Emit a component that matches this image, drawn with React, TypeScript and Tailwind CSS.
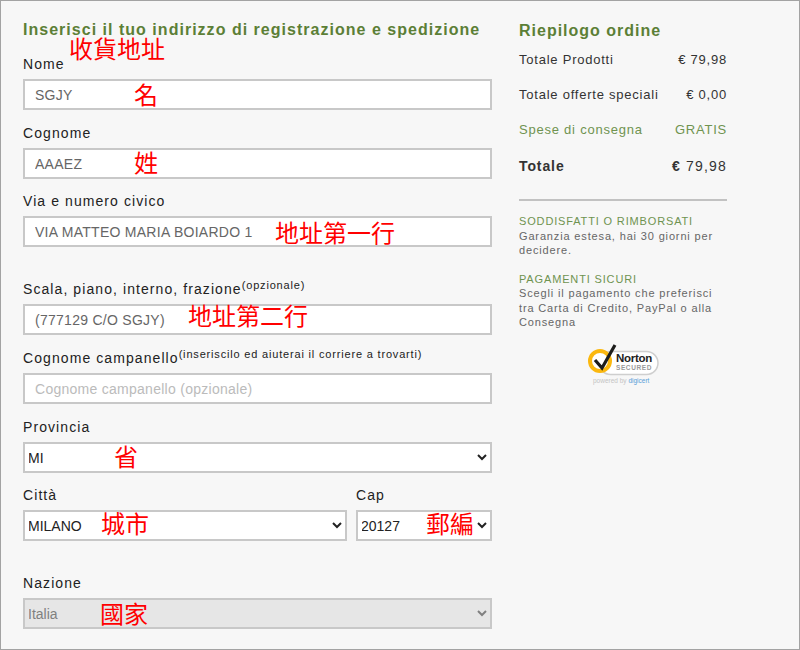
import type { ReactNode } from "react";

const inputClass =
  "block h-[31px] w-full border-2 border-[#c8c8c8] bg-white px-[10px] text-[14px] tracking-[0.27px] text-[#666] outline-none placeholder:text-[#bbb]";
const selectClass =
  "block h-[31px] w-full border-2 border-[#c8c8c8] bg-white text-[14px] text-[#222] outline-none [text-indent:-1px]";

function Label({ children }: { children: ReactNode }) {
  return <label className="block h-[25px] text-[14px] leading-[20px] tracking-[1.08px] text-[#222]">{children}</label>;
}

function Note({ children }: { children: ReactNode }) {
  return <sup className="text-[11px] tracking-[0.82px]">{children}</sup>;
}

function Mark({ className, children }: { className: string; children: ReactNode }) {
  return (
    <span className={`pointer-events-none absolute whitespace-nowrap text-[24px] leading-[30px] text-[#f00] ${className}`}>
      {children}
    </span>
  );
}

function SummaryRow({ label, value, green }: { label: string; value: string; green?: boolean }) {
  return (
    <div className={`flex h-[35px] items-center justify-between text-[13px] tracking-[0.77px] ${green ? "text-[#6f9350]" : "text-[#333]"}`}>
      <span>{label}</span>
      <span>{value}</span>
    </div>
  );
}

function NortonBadge() {
  return (
    <div className="relative mt-[14px] ml-[68px] h-[42px] w-[74px]">
      <svg width="74" height="42" viewBox="0 0 74 42" className="absolute left-0 top-0">
        <rect x="12" y="7.5" width="59" height="23" rx="11.5" fill="#fff" stroke="#cfcfcf" strokeWidth="1.5" />
        <circle cx="13" cy="17" r="10" fill="#fff" stroke="#fbb80f" strokeWidth="4" />
        <path d="M8 16 L15 24 L28 1" fill="none" stroke="#1d1d1b" strokeWidth="3.2" />
      </svg>
      <span className="absolute left-[29px] top-[7px] text-[11.5px] font-bold leading-[14px] tracking-[-0.3px] text-[#222]">Norton</span>
      <span className="absolute left-[29px] top-[20px] text-[6.5px] font-bold leading-[8px] tracking-[0.6px] text-[#9a9a9a]">SECURED</span>
      <span className="absolute left-[6px] top-[33px] whitespace-nowrap text-[6.5px] leading-[8px] text-[#c4c4c4]">
        powered by <span className="text-[#5aa0d8]">digicert</span>
      </span>
    </div>
  );
}

export default function App() {
  return (
    <div className="relative box-border flex h-[650px] w-[800px] border border-[#a3a3a3] bg-[#f7f7f7] [font-family:'Liberation_Sans','Noto_Sans_CJK_TC',sans-serif]">
      {/* form */}
      <div className="ml-[22px] w-[469px] pt-[19px]">
        <h2 className="h-[20px] text-[16px] font-bold leading-[20px] tracking-[1.02px] text-[#5c7f36]">
          Inserisci il tuo indirizzo di registrazione e spedizione
        </h2>
        <div className="mt-[14px]">
          <Label>Nome</Label>
          <input className={inputClass} defaultValue="SGJY" />
        </div>
        <div className="mt-[13px]">
          <Label>Cognome</Label>
          <input className={inputClass} defaultValue="AAAEZ" />
        </div>
        <div className="mt-[12px]">
          <Label>Via e numero civico</Label>
          <input className={inputClass} defaultValue="VIA MATTEO MARIA BOIARDO 1" />
        </div>
        <div className="mt-[32px]">
          <Label>
            Scala, piano, interno, frazione<Note>(opzionale)</Note>
          </Label>
          <input className={inputClass} defaultValue="(777129 C/O SGJY)" />
        </div>
        <div className="mt-[13px]">
          <Label>
            Cognome campanello<Note>(inseriscilo ed aiuterai il corriere a trovarti)</Note>
          </Label>
          <input className={inputClass} placeholder="Cognome campanello (opzionale)" />
        </div>
        <div className="mt-[13px]">
          <Label>Provincia</Label>
          <select className={selectClass} defaultValue="MI">
            <option>MI</option>
          </select>
        </div>
        <div className="mt-[12px] flex gap-[9px]">
          <div className="w-[324px]">
            <Label>Città</Label>
            <select className={selectClass} defaultValue="MILANO">
              <option>MILANO</option>
            </select>
          </div>
          <div className="w-[136px]">
            <Label>Cap</Label>
            <select className={selectClass} defaultValue="20127">
              <option>20127</option>
            </select>
          </div>
        </div>
        <div className="mt-[32px]">
          <Label>Nazione</Label>
          <select
            disabled
            className="block h-[31px] w-full border-2 border-[#c8c8c8] bg-[#e6e6e6] text-[14px] text-[#808080] outline-none [text-indent:-1px]"
            defaultValue="Italia"
          >
            <option>Italia</option>
          </select>
        </div>
      </div>

      {/* summary */}
      <div className="ml-[27px] w-[208px] pt-[20px]">
        <h2 className="h-[20px] text-[16px] font-bold leading-[20px] tracking-[1px] text-[#5c7f36]">Riepilogo ordine</h2>
        <div className="mt-[1px]">
          <SummaryRow label="Totale Prodotti" value="€ 79,98" />
          <SummaryRow label="Totale offerte speciali" value="€ 0,00" />
          <SummaryRow label="Spese di consegna" value="GRATIS" green />
          <div className="flex h-[37px] items-center justify-between pt-[2px] text-[14px] tracking-[0.9px] text-[#333]">
            <span className="font-bold">Totale</span>
            <span className="tracking-[1.2px]">
              <b>€</b> 79,98
            </span>
          </div>
        </div>
        <div className="mt-[15px] border-t-2 border-[#c2c2c2]" />
        <div className="mt-[13px] w-[200px] text-[11px] leading-[14.5px] tracking-[0.85px] text-[#666]">
          <h3 className="text-[#6f9350]">SODDISFATTI O RIMBORSATI</h3>
          <p>Garanzia estesa, hai 30 giorni per decidere.</p>
          <h3 className="mt-[14px] text-[#6f9350]">PAGAMENTI SICURI</h3>
          <p>Scegli il pagamento che preferisci tra Carta di Credito, PayPal o alla Consegna</p>
        </div>
        <NortonBadge />
      </div>

      {/* red notes written over the screenshot */}
      <Mark className="left-[68px] top-[34px]">收貨地址</Mark>
      <Mark className="left-[133px] top-[80px]">名</Mark>
      <Mark className="left-[133px] top-[148px]">姓</Mark>
      <Mark className="left-[274px] top-[218px]">地址第一行</Mark>
      <Mark className="left-[187px] top-[301px]">地址第二行</Mark>
      <Mark className="left-[113px] top-[442px]">省</Mark>
      <Mark className="left-[100px] top-[509px]">城市</Mark>
      <Mark className="left-[425px] top-[509px]">郵編</Mark>
      <Mark className="left-[99px] top-[599px]">國家</Mark>
    </div>
  );
}
